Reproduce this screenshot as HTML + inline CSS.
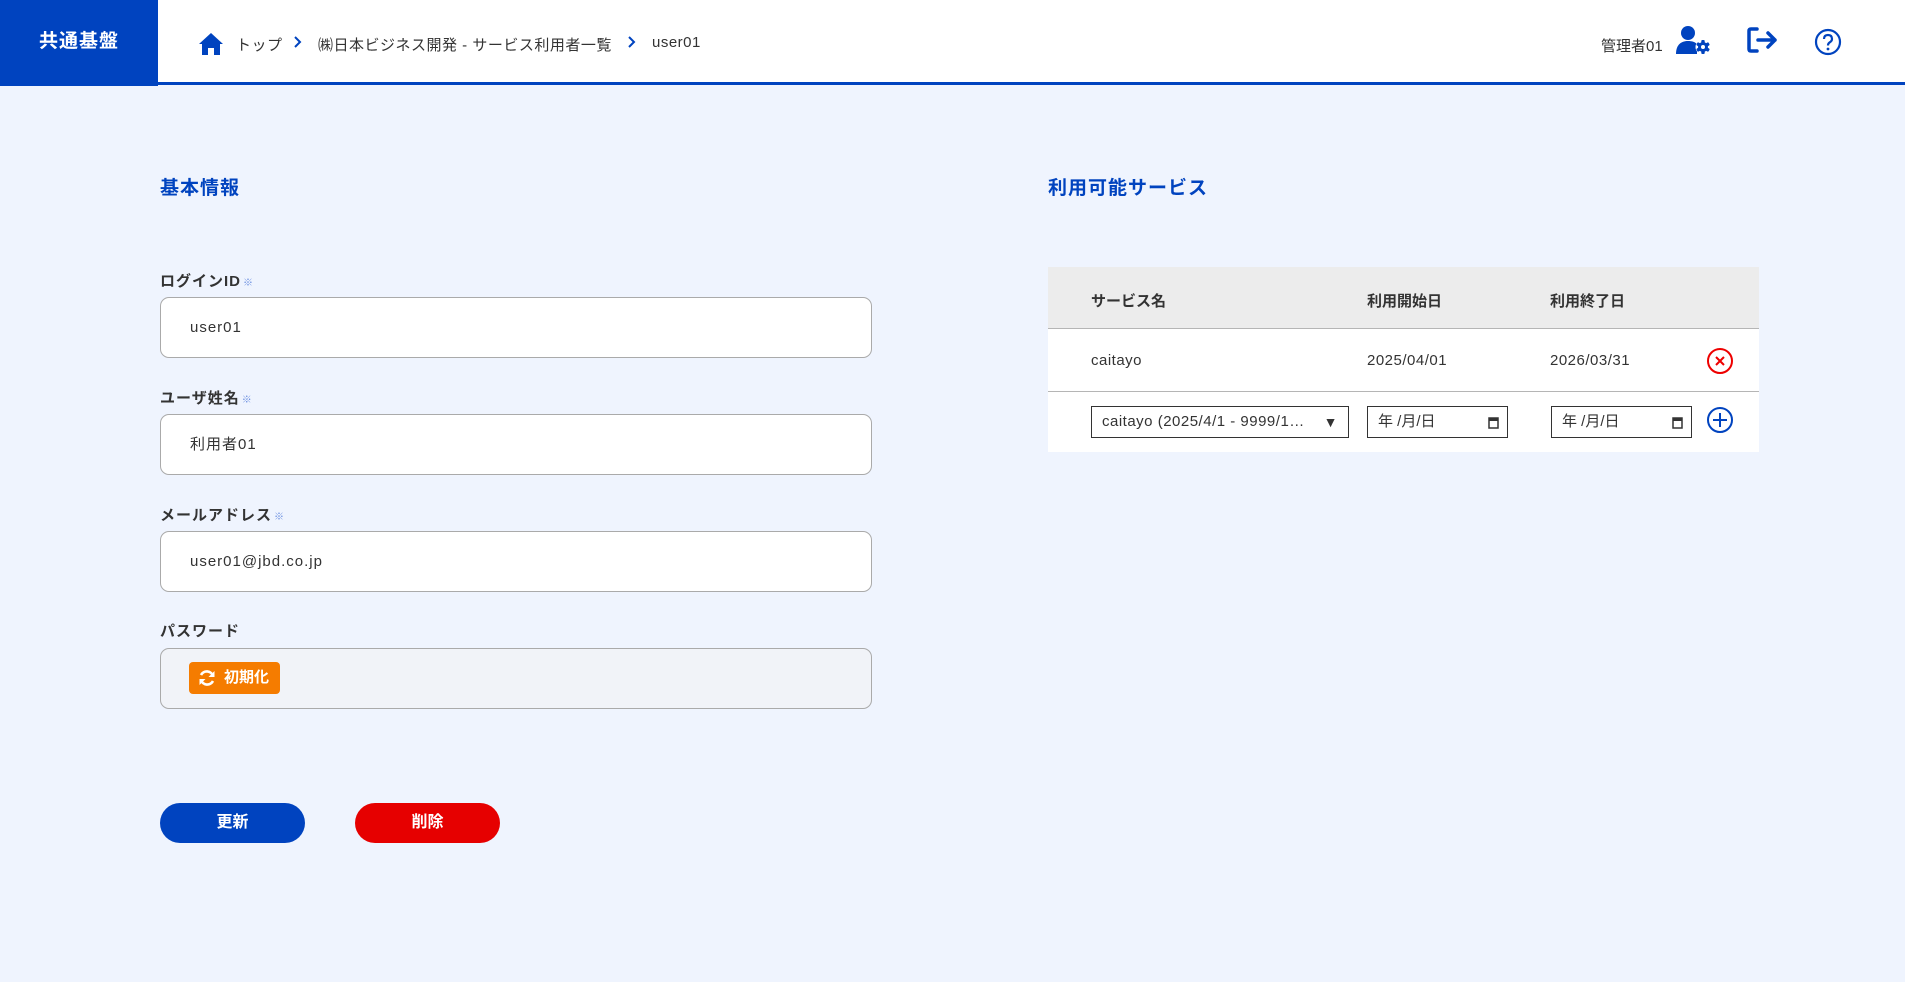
<!DOCTYPE html>
<html><head><meta charset="utf-8"><style>
*{box-sizing:border-box;margin:0;padding:0}
body{width:1905px;height:982px;background:#eff4fe;font-family:"Liberation Sans","Noto Sans CJK JP",sans-serif;color:#333;position:relative;overflow:hidden}
.hdr{position:absolute;left:0;top:0;width:1905px;height:85px;background:#fff;border-bottom:3px solid #0043bf}
.logo{position:absolute;left:0;top:0;width:158px;height:86px;background:#0043bf;color:#fff;font-weight:bold;font-size:19px;line-height:84px;text-align:center;letter-spacing:1px}
.abs{position:absolute}
.bc{font-size:15px;top:34px;letter-spacing:.5px}
.h2{font-size:19px;font-weight:bold;color:#0043bf;letter-spacing:1px}
.lbl{font-size:15px;font-weight:bold;letter-spacing:1px;left:160px}
.lbl i{font-style:normal;color:#6a8ee0;font-size:10px;margin-left:2px}
.inp{left:160px;width:712px;height:61px;background:#fff;border:1px solid #aaa;border-radius:9px;font-size:15px;line-height:59px;padding-left:29px;letter-spacing:1px}
.btn{width:145px;height:40px;border-radius:20px;color:#fff;font-weight:bold;font-size:16px;line-height:40px;text-align:center;top:803px}
.th{font-size:15px;font-weight:bold}
.td{font-size:15px;letter-spacing:.5px}
.box{border:1px solid #333;background:#fff;height:32px;font-size:15px;line-height:30px;padding-left:10px}
.cal{position:absolute;right:8px;top:9px}
</style></head><body>
<div class="hdr"></div>
<div class="logo">共通基盤</div>
<svg class="abs" style="left:198px;top:32px" width="26" height="24" viewBox="0 0 26 24"><path d="M13 1 L1 12 H4 V23 H10 V16 H16 V23 H22 V12 H25 Z" fill="#0043bf"/></svg>
<div class="abs bc" style="left:236px">トップ</div>
<svg class="abs" style="left:293px;top:35px" width="10" height="14"><path d="M2 2 L7 7 L2 12" stroke="#0043bf" stroke-width="2" fill="none"/></svg>
<div class="abs bc" style="left:318px">㈱日本ビジネス開発 - サービス利用者一覧</div>
<svg class="abs" style="left:627px;top:35px" width="10" height="14"><path d="M2 2 L7 7 L2 12" stroke="#0043bf" stroke-width="2" fill="none"/></svg>
<div class="abs bc" style="left:652px">user01</div>
<div class="abs" style="left:1601px;top:35px;font-size:15px">管理者01</div>
<svg class="abs" style="left:1676px;top:25px" width="36" height="30" viewBox="0 0 36 30"><circle cx="12" cy="8" r="7" fill="#0043bf"/><path d="M0 29 C0 19 6 16 12 16 C16 16 19 17 21 19 L21 29 Z" fill="#0043bf"/><circle cx="27" cy="22" r="7.5" fill="#fff"/><g fill="#0043bf"><rect x="25.3" y="15" width="3.4" height="14" rx="1"/><rect x="25.3" y="15" width="3.4" height="14" rx="1" transform="rotate(60 27 22)"/><rect x="25.3" y="15" width="3.4" height="14" rx="1" transform="rotate(120 27 22)"/><circle cx="27" cy="22" r="5"/></g><circle cx="27" cy="22" r="2" fill="#fff"/></svg>
<svg class="abs" style="left:1746px;top:26px" width="34" height="28" viewBox="0 0 34 28"><path d="M11 3 H5 Q3 3 3 5 V23 Q3 25 5 25 H11" stroke="#0043bf" stroke-width="3.5" fill="none" stroke-linecap="round"/><path d="M12 14 H29 M22 7 L29 14 L22 21" stroke="#0043bf" stroke-width="3.5" fill="none" stroke-linecap="round" stroke-linejoin="round"/></svg>
<svg class="abs" style="left:1814px;top:28px" width="28" height="28" viewBox="0 0 28 28"><circle cx="14" cy="14" r="12" stroke="#0043bf" stroke-width="2.2" fill="none"/><path d="M10 11 Q10 7 14 7 Q18 7 18 11 Q18 13 15.5 14.5 Q14 15.5 14 17.5" stroke="#0043bf" stroke-width="2.2" fill="none"/><circle cx="14" cy="21" r="1.4" fill="#0043bf"/></svg>

<div class="abs h2" style="left:160px;top:173px">基本情報</div>
<div class="abs lbl" style="top:270px">ログインID<i>※</i></div>
<div class="abs inp" style="top:297px">user01</div>
<div class="abs lbl" style="top:387px">ユーザ姓名<i>※</i></div>
<div class="abs inp" style="top:414px">利用者01</div>
<div class="abs lbl" style="top:504px">メールアドレス<i>※</i></div>
<div class="abs inp" style="top:531px">user01@jbd.co.jp</div>
<div class="abs lbl" style="top:620px">パスワード</div>
<div class="abs inp" style="top:648px;background:#f1f3f8"></div>
<div class="abs" style="left:189px;top:662px;width:91px;height:32px;background:#f57c00;border-radius:4px;color:#fff;font-weight:bold;font-size:15px;line-height:32px;padding-left:35px">初期化</div>
<svg class="abs" style="left:197px;top:668px" width="20" height="20" viewBox="0 0 20 20"><path d="M16 8 A6.5 6.5 0 0 0 4 7" stroke="#fff" stroke-width="2.6" fill="none"/><path d="M17.5 3 V9 H11.5 Z" fill="#fff"/><path d="M4 12 A6.5 6.5 0 0 0 16 13" stroke="#fff" stroke-width="2.6" fill="none"/><path d="M2.5 17 V11 H8.5 Z" fill="#fff"/></svg>
<div class="abs btn" style="left:160px;background:#0043bf">更新</div>
<div class="abs btn" style="left:355px;background:#e60000">削除</div>

<div class="abs h2" style="left:1048px;top:173px">利用可能サービス</div>
<div class="abs" style="left:1048px;top:267px;width:711px;height:185px;background:#fff"></div>
<div class="abs" style="left:1048px;top:267px;width:711px;height:62px;background:#ececec;border-bottom:1px solid #b5b5b5"></div>
<div class="abs" style="left:1048px;top:391px;width:711px;height:1px;background:#b5b5b5"></div>
<div class="abs th" style="left:1091px;top:290px">サービス名</div>
<div class="abs th" style="left:1367px;top:290px">利用開始日</div>
<div class="abs th" style="left:1550px;top:290px">利用終了日</div>
<div class="abs td" style="left:1091px;top:352px">caitayo</div>
<div class="abs td" style="left:1367px;top:352px">2025/04/01</div>
<div class="abs td" style="left:1550px;top:352px">2026/03/31</div>
<svg class="abs" style="left:1706px;top:347px" width="28" height="28" viewBox="0 0 28 28"><circle cx="14" cy="14" r="12" stroke="#e00" stroke-width="2" fill="none"/><path d="M10 10 L18 18 M18 10 L10 18" stroke="#e00" stroke-width="2"/></svg>
<div class="abs box" style="left:1091px;top:406px;width:258px;letter-spacing:.5px">caitayo (2025/4/1 - 9999/1…<span style="position:absolute;right:10px;top:0;font-size:14px">▼</span></div>
<div class="abs box" style="left:1367px;top:406px;width:141px">年 /月/日<svg class="cal" width="11" height="13" viewBox="0 0 11 13"><rect x="1" y="2" width="9" height="10" fill="none" stroke="#333" stroke-width="1.5"/><rect x="1" y="2" width="9" height="3" fill="#333"/></svg></div>
<div class="abs box" style="left:1551px;top:406px;width:141px">年 /月/日<svg class="cal" width="11" height="13" viewBox="0 0 11 13"><rect x="1" y="2" width="9" height="10" fill="none" stroke="#333" stroke-width="1.5"/><rect x="1" y="2" width="9" height="3" fill="#333"/></svg></div>
<svg class="abs" style="left:1706px;top:406px" width="28" height="28" viewBox="0 0 28 28"><circle cx="14" cy="14" r="12" stroke="#0043bf" stroke-width="2" fill="none"/><path d="M14 7 V21 M7 14 H21" stroke="#0043bf" stroke-width="2"/></svg>
</body></html>
